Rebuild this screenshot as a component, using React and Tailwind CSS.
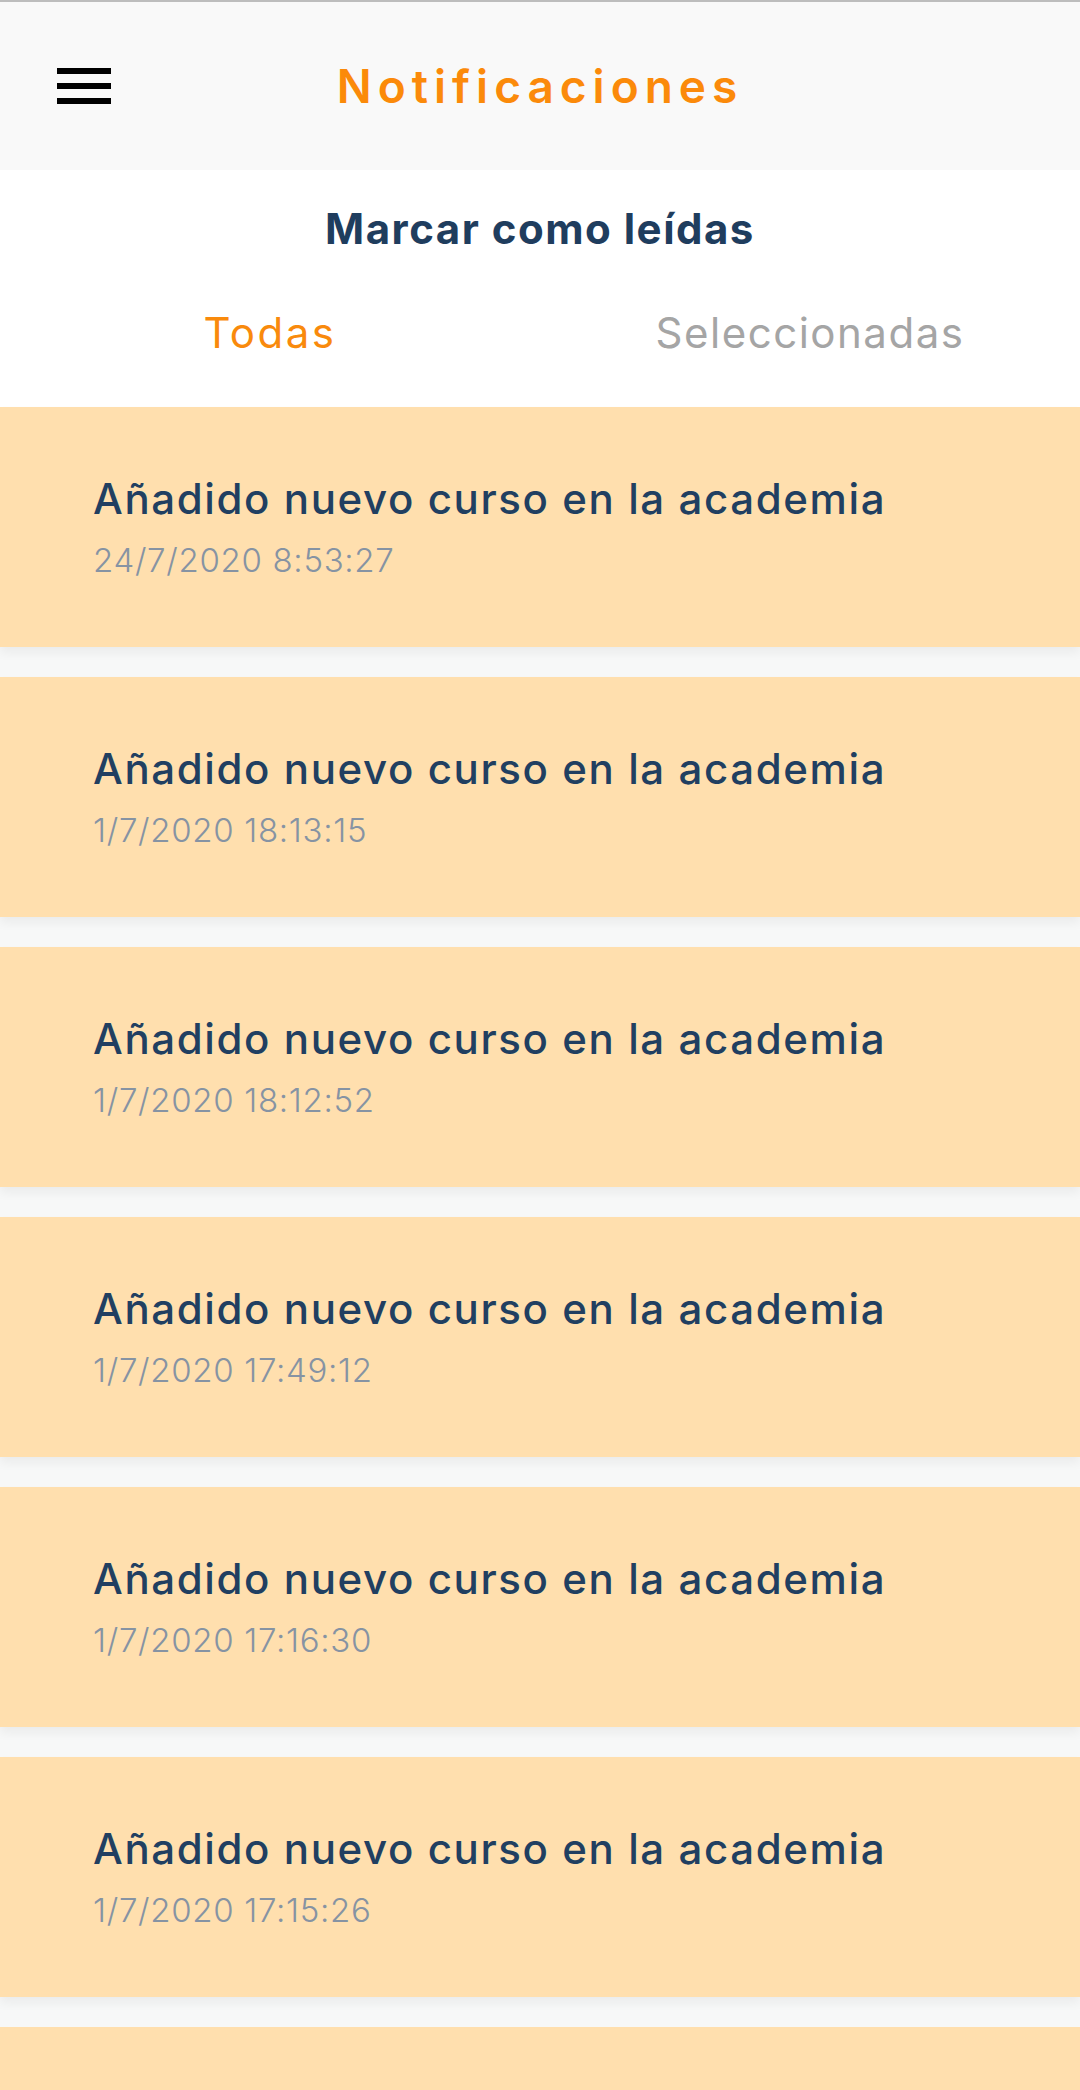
import React from "react";

const items = [
  "24/7/2020 8:53:27",
  "1/7/2020 18:13:15",
  "1/7/2020 18:12:52",
  "1/7/2020 17:49:12",
  "1/7/2020 17:16:30",
  "1/7/2020 17:15:26",
];

export default function App() {
  return (
    <div
      className="w-[1080px] h-[2090px] overflow-hidden bg-[#f7f8f8]"
      style={{ fontFamily: "Inter, 'Noto Sans', sans-serif" }}
    >
      <div className="h-[2px] bg-[#bdbdbd]" />
      <header className="relative h-[168px] bg-[#f9f9f9] flex items-center justify-center">
        <button className="absolute left-[57px] top-[66px] w-[54px] flex flex-col gap-[9px]">
          <span className="block h-[6px] w-[54px] bg-black" />
          <span className="block h-[6px] w-[54px] bg-black" />
          <span className="block h-[6px] w-[54px] bg-black" />
        </button>
        <h1 className="text-[46px] font-semibold tracking-[6px] text-[#fb8a0a] leading-none">
          Notificaciones
        </h1>
      </header>
      <section className="bg-white h-[237px] flex flex-col">
        <div className="h-[118px] flex items-center justify-center">
          <span className="text-[42px] font-bold text-[#1f3d5e] leading-none tracking-[1.5px]">
            Marcar como leídas
          </span>
        </div>
        <div className="h-[90px] grid grid-cols-2">
          <div className="flex items-center justify-center text-[42px] text-[#f98a0c] tracking-[2.5px] leading-none">
            Todas
          </div>
          <div className="flex items-center justify-center text-[42px] text-[#a5a5a5] tracking-[1.5px] leading-none">
            Seleccionadas
          </div>
        </div>
      </section>
      <div className="flex flex-col gap-[30px]">
        {items.map((d, i) => (
          <div
            key={i}
            className="h-[240px] bg-[#ffdfae] shadow-[0_6px_10px_rgba(0,0,0,0.05)] flex flex-col justify-center pl-[93px] gap-[17px]"
          >
            <div className="text-[42px] leading-[48px] font-medium text-[#213f61] tracking-[1.6px]">
              Añadido nuevo curso en la academia
            </div>
            <div className="text-[33px] leading-[40px] font-light text-[#8693a3] tracking-[0.7px]">
              {d}
            </div>
          </div>
        ))}
        <div className="h-[240px] bg-[#ffdfae]" />
      </div>
    </div>
  );
}
